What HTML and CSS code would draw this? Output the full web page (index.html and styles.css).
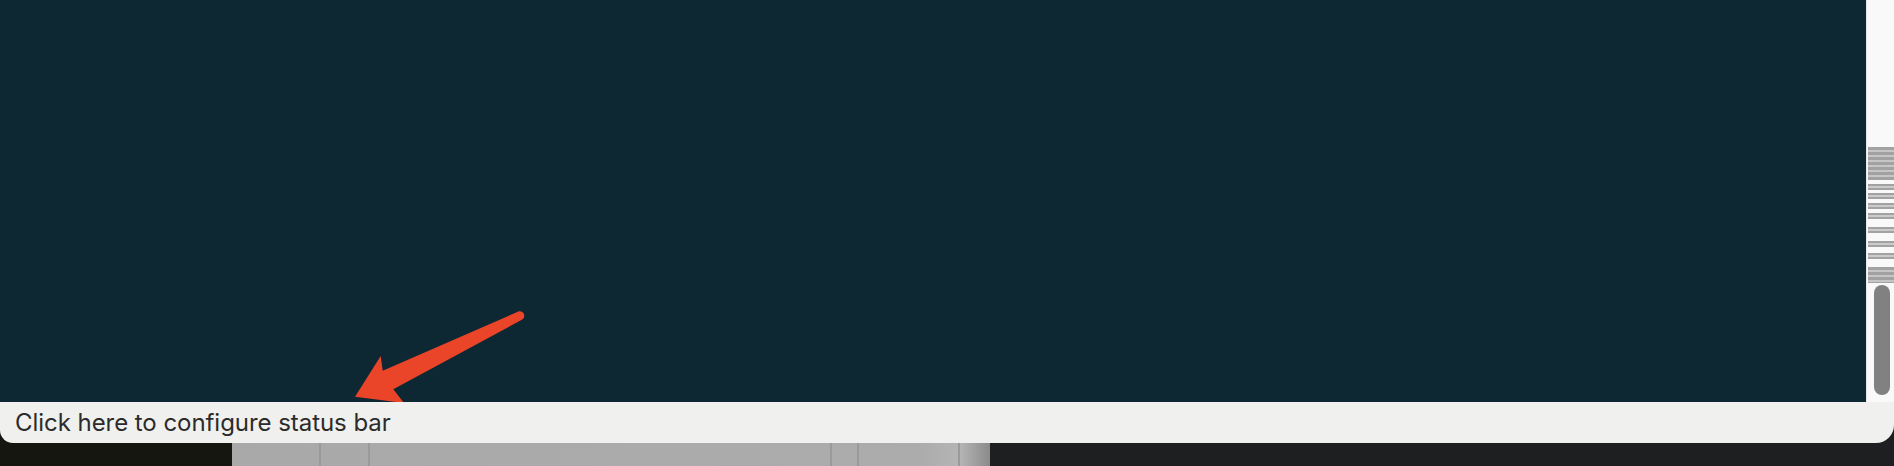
FILE: index.html
```html
<!DOCTYPE html>
<html>
<head>
<meta charset="utf-8">
<link rel="stylesheet" href="styles.css">
</head>
<body>
<div class="screen">
  <div class="window">
    <div class="main">
      <div class="term">
        <svg class="arrow" width="180" height="105" viewBox="0 0 180 105">
          <path d="M5 96.7 L30.7 56 L32.7 70.7 L166.7 12.3 A4.6 4.6 0 0 1 172.7 19.3 L43.3 89.3 L54 103 Z" fill="#ea4429"/>
        </svg>
      </div>
      <div class="scroll">
        <div class="mark block" style="top:147px;height:33px"></div>
        <div class="mark" style="top:184px"></div>
        <div class="mark" style="top:193px"></div>
        <div class="mark" style="top:203px"></div>
        <div class="mark" style="top:213px"></div>
        <div class="mark" style="top:227px"></div>
        <div class="mark" style="top:241px"></div>
        <div class="mark" style="top:253px"></div>
        <div class="mark block" style="top:267px;height:16px"></div>
        <div class="thumb"></div>
      </div>
    </div>
    <div class="status">Click here to configure status bar</div>
  </div>
  <div class="desk">
    <div class="desk-left"></div>
    <div class="desk-gray">
      <span class="vline" style="left:87px"></span>
      <span class="vline" style="left:136px"></span>
      <span class="vline" style="left:598px"></span>
      <span class="vline" style="left:625px"></span>
      <span class="vline" style="left:726px"></span>
    </div>
    <div class="desk-right"></div>
  </div>
</div>
</body>
</html>
```

FILE: styles.css
```css
html, body {
  margin: 0;
  padding: 0;
  background: #1e1f21;
  overflow: hidden;
}

.screen {
  width: 1894px;
  height: 466px;
  display: flex;
  flex-direction: column;
}

.window {
  position: relative;
  z-index: 1;
  display: flex;
  flex-direction: column;
}

.main {
  display: flex;
  height: 402px;
}

.term {
  flex: 1;
  background: #0d2833;
  position: relative;
  overflow: hidden;
}

.arrow {
  position: absolute;
  left: 350px;
  top: 300px;
}

.scroll {
  width: 27px;
  background: #f9f9f9;
  border-left: 1px solid #ebe6e6;
  position: relative;
}

.mark {
  position: absolute;
  left: 1px;
  right: 0;
  height: 6px;
  background: linear-gradient(#a2a2a2 0 2px, #cacaca 2px 4px, #a2a2a2 4px 6px);
}

.mark.block {
  background: repeating-linear-gradient(#a2a2a2 0 3px, #c6c6c6 3px 5px);
}

.thumb {
  position: absolute;
  left: 7px;
  top: 285px;
  width: 16px;
  height: 110px;
  border-radius: 8px;
  background: #818181;
}

.status {
  height: 41px;
  background: #f0f0ee;
  border-radius: 0 0 18px 13px;
  display: flex;
  align-items: center;
  padding-left: 15px;
  font-family: Inter, "Liberation Sans", sans-serif;
  font-size: 24px;
  letter-spacing: -0.05px;
  color: #2b2b2b;
}

.desk {
  margin-top: -18px;
  height: 41px;
  display: flex;
}

.desk-left {
  width: 232px;
  background: #15160f;
}

.desk-gray {
  width: 758px;
  position: relative;
  background: linear-gradient(90deg, #a9a9a9 0, #acacac 690px, #b5b5b5 728px, #8a8a8a 758px);
}

.vline {
  position: absolute;
  top: 0;
  bottom: 0;
  width: 2px;
  background: #9a9a9a;
}

.desk-right {
  flex: 1;
  background: #1e1f21;
}
```
